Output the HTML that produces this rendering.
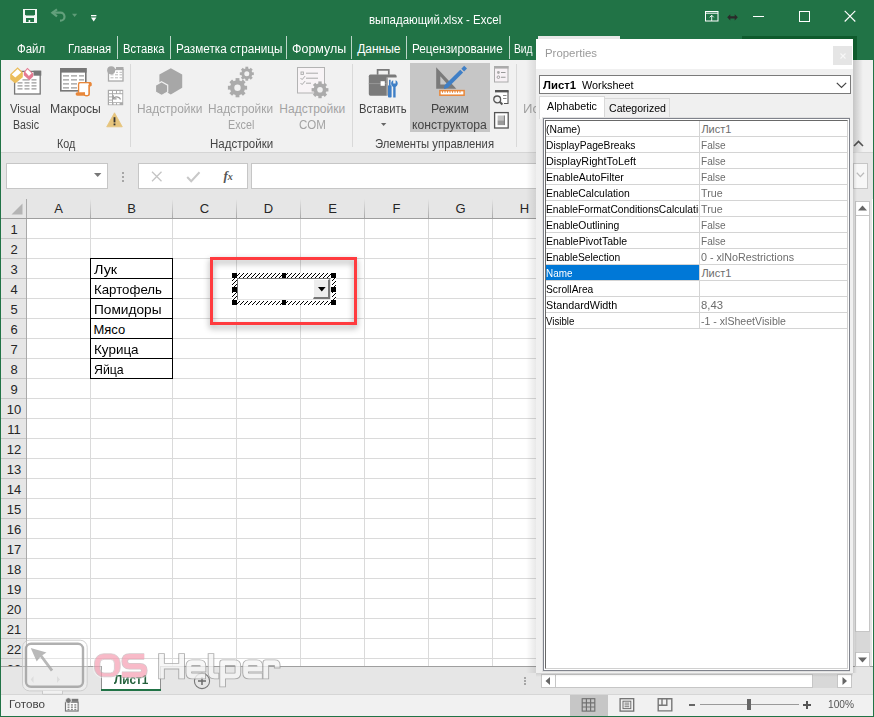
<!DOCTYPE html>
<html><head><meta charset="utf-8">
<style>
*{margin:0;padding:0;box-sizing:border-box}
html,body{width:874px;height:717px;overflow:hidden;background:#fff;font-family:"Liberation Sans",sans-serif}
.a{position:absolute}
.t{position:absolute;white-space:nowrap;line-height:1}
svg{overflow:visible}
</style></head><body>
<div class="a" style="left:0px;top:0px;width:874px;height:60px;background:#217346;"></div>
<div class="a" style="left:1px;top:60px;width:872px;height:92px;background:#f1f1f1;"></div>
<div class="a" style="left:1px;top:152px;width:872px;height:1px;background:#d5d5d5;"></div>
<div class="a" style="left:1px;top:153px;width:872px;height:46px;background:#e6e6e6;"></div>
<svg class="a" style="left:23px;top:9px" width="14" height="14" viewBox="0 0 14 14">
<rect x="0" y="0" width="14" height="14" fill="#f4f8f5"/>
<path d="M2 1.1h10v4.1l-1 1.2H3l-1-1.2z" fill="#217346"/>
<path d="M3 9.1h8v3.9H7.2v-2h-1.6v2H3z" fill="#217346"/>
</svg>
<svg class="a" style="left:50px;top:8px" width="30" height="16" viewBox="0 0 30 16">
<path d="M2.5 4.7h8a4 4 0 0 1 0 8H10" fill="none" stroke="#63a07c" stroke-width="2.2"/>
<path d="M7 1.3L2.4 4.7 7 8.3" stroke="#63a07c" stroke-width="2.2" fill="none"/>
<path d="M22 5.8h5.2l-2.6 3.2z" fill="#5f9c78"/>
</svg>
<svg class="a" style="left:91px;top:14.6px" width="6" height="7" viewBox="0 0 6 7">
<rect x="0" y="0" width="5.4" height="1.3" fill="#fff"/>
<path d="M0 2.6h5.4l-2.7 3.8z" fill="#fff"/>
</svg>
<div class="t" style="top:13.84px;font-size:12px;color:#fff;left:369.40px;transform:scaleX(0.9570);transform-origin:0 0;">выпадающий.xlsx - Excel</div>
<svg class="a" style="left:705px;top:11px" width="14" height="11" viewBox="0 0 14 11">
<rect x="0.5" y="0.5" width="12.5" height="9.5" fill="none" stroke="#fff" stroke-width="1"/>
<path d="M0.5 2.2h12.5" stroke="#fff" stroke-width="1"/>
<path d="M6.7 10V4.2M4.7 6.3l2-2 2 2" stroke="#fff" stroke-width="0.9" fill="none"/>
</svg>
<svg class="a" style="left:726.5px;top:13.5px" width="11" height="7" viewBox="0 0 11 7">
<path d="M0.2 3.3L3.3 0.2v2h4.4v-2l3.1 3.1-3.1 3.1v-2H3.3v2z" fill="#2a2a2a"/>
</svg>
<div class="a" style="left:753px;top:16px;width:11px;height:1px;background:#fff;"></div>
<div class="a" style="left:799px;top:11px;width:11px;height:11px;background:transparent;border:1px solid #fff;"></div>
<svg class="a" style="left:844px;top:10px" width="12" height="12" viewBox="0 0 12 12">
<path d="M0.7 0.9l10.6 10.6M11.3 0.9L0.7 11.5" stroke="#fff" stroke-width="1.1"/>
</svg>
<div class="t" style="top:42.84px;font-size:12px;color:#fff;left:16.70px;transform:scaleX(0.9554);transform-origin:0 0;">Файл</div>
<div class="t" style="top:42.84px;font-size:12px;color:#fff;left:68.30px;transform:scaleX(0.9456);transform-origin:0 0;">Главная</div>
<div class="t" style="top:42.84px;font-size:12px;color:#fff;left:123.40px;transform:scaleX(0.9325);transform-origin:0 0;">Вставка</div>
<div class="t" style="top:42.84px;font-size:12px;color:#fff;left:175.60px;transform:scaleX(0.9773);transform-origin:0 0;">Разметка страницы</div>
<div class="t" style="top:42.84px;font-size:12px;color:#fff;left:291.80px;transform:scaleX(1.0379);transform-origin:0 0;">Формулы</div>
<div class="t" style="top:42.84px;font-size:12px;color:#fff;left:357.20px;">Данные</div>
<div class="t" style="top:42.84px;font-size:12px;color:#fff;left:411.70px;transform:scaleX(0.9787);transform-origin:0 0;">Рецензирование</div>
<div class="t" style="top:42.84px;font-size:12px;color:#fff;left:513.60px;transform:scaleX(0.8564);transform-origin:0 0;">Вид</div>
<div class="a" style="left:117px;top:36px;width:1px;height:23px;background:rgba(255,255,255,0.7);"></div>
<div class="a" style="left:170px;top:36px;width:1px;height:23px;background:rgba(255,255,255,0.7);"></div>
<div class="a" style="left:286px;top:36px;width:1px;height:23px;background:rgba(255,255,255,0.7);"></div>
<div class="a" style="left:351px;top:36px;width:1px;height:23px;background:rgba(255,255,255,0.7);"></div>
<div class="a" style="left:406px;top:36px;width:1px;height:23px;background:rgba(255,255,255,0.7);"></div>
<div class="a" style="left:509px;top:36px;width:1px;height:23px;background:rgba(255,255,255,0.7);"></div>
<div class="a" style="left:538px;top:36px;width:82px;height:3px;background:#e8e8e8;"></div>
<div class="a" style="left:742px;top:36px;width:115px;height:3px;background:#1b5e39;"></div>
<div class="t" style="top:102.84px;font-size:12px;color:#444;left:10.10px;transform:scaleX(0.9363);transform-origin:0 0;">Visual</div>
<div class="t" style="top:118.54px;font-size:12px;color:#444;left:12.80px;transform:scaleX(0.8860);transform-origin:0 0;">Basic</div>
<div class="t" style="top:102.84px;font-size:12px;color:#444;left:49.60px;transform:scaleX(1.0174);transform-origin:0 0;">Макросы</div>
<div class="t" style="top:137.84px;font-size:12px;color:#444;left:56.50px;transform:scaleX(0.8968);transform-origin:0 0;">Код</div>
<div class="t" style="top:102.84px;font-size:12px;color:#a3a3a3;left:137.20px;transform:scaleX(0.9917);transform-origin:0 0;">Надстройки</div>
<div class="t" style="top:102.84px;font-size:12px;color:#a3a3a3;left:208.30px;transform:scaleX(0.9872);transform-origin:0 0;">Надстройки</div>
<div class="t" style="top:118.84px;font-size:12px;color:#a3a3a3;left:228.00px;transform:scaleX(0.8963);transform-origin:0 0;">Excel</div>
<div class="t" style="top:102.84px;font-size:12px;color:#a3a3a3;left:279.30px;">Надстройки</div>
<div class="t" style="top:118.84px;font-size:12px;color:#a3a3a3;left:298.50px;transform:scaleX(0.9607);transform-origin:0 0;">COM</div>
<div class="t" style="top:137.84px;font-size:12px;color:#444;left:209.60px;transform:scaleX(0.9583);transform-origin:0 0;">Надстройки</div>
<div class="a" style="left:410px;top:63px;width:80px;height:69px;background:#c6c6c6;"></div>
<div class="t" style="top:102.84px;font-size:12px;color:#444;left:359.20px;transform:scaleX(0.9356);transform-origin:0 0;">Вставить</div>
<div class="t" style="top:102.84px;font-size:12px;color:#444;left:431.00px;transform:scaleX(1.0270);transform-origin:0 0;">Режим</div>
<div class="t" style="top:118.84px;font-size:12px;color:#444;left:412.00px;transform:scaleX(1.0177);transform-origin:0 0;">конструктора</div>
<div class="t" style="top:137.84px;font-size:12px;color:#444;left:374.70px;transform:scaleX(0.9418);transform-origin:0 0;">Элементы управления</div>
<div class="t" style="top:102.84px;font-size:12px;color:#a3a3a3;left:523.00px;transform:scaleX(1.0940);transform-origin:0 0;">Ис</div>
<div class="a" style="left:130px;top:64px;width:1px;height:83px;background:#d9d9d9;"></div>
<div class="a" style="left:352px;top:64px;width:1px;height:83px;background:#d9d9d9;"></div>
<div class="a" style="left:516px;top:64px;width:1px;height:83px;background:#d9d9d9;"></div>
<svg class="a" style="left:8px;top:66px" width="36" height="30" viewBox="0 0 36 30">
<rect x="6.6" y="5.4" width="25.6" height="22.6" fill="#fff" stroke="#777" stroke-width="1.3"/>
<rect x="25.5" y="4.7" width="7.8" height="5" fill="#777"/>
<g stroke="#9a9a9a" stroke-width="1.2"><path d="M9.5 22.8h5M16.5 22.8h5M23.5 22.8h5M9.5 19.8h5M16.5 19.8h5M23.5 19.8h5M9.5 16.8h5M16.5 16.8h5M23.5 16.8h5M14.5 13.8h7M23.5 13.8h5"/></g>
<path d="M9.6 1.3L14.8 6.3V11.3L7.3 17.4 2.2 13.3V8.3z" fill="#ebbd5c"/>
<path d="M9.6 2.9L13.2 6.4 7.3 11.6 3.8 8.4z" fill="#fff"/>
<path d="M19.4 1.8L25.2 7.4V10.4L21.4 14.2 15.8 9.2V5.9z" fill="#e57a92"/>
<path d="M19.4 3.2L23.6 7.2 20.9 9.9 17.3 6.1z" fill="#fff"/>
</svg>
<svg class="a" style="left:59px;top:67px" width="34" height="30" viewBox="0 0 34 30">
<rect x="1.8" y="1.8" width="25" height="22" fill="#fff" stroke="#777" stroke-width="1.6"/>
<rect x="1" y="1" width="26.6" height="4.6" fill="#777"/>
<g stroke="#9a9a9a" stroke-width="1.2"><path d="M4 8.8h6M12 8.8h6M20 8.8h5M4 12.8h6M12 12.8h6M20 12.8h5M4 16.8h6M12 16.8h6M4 20.8h6M12 20.8h6"/></g>
<path d="M19.6 26V17.2q0-1.6 1.6-1.6h9.6q0.9 0 0.9 0.9v2h-1.6v8.4q0 1.7-1.7 1.7h-1.6q-1.6 0-1.6-1.6V25.5" fill="#fff" stroke="#e8873a" stroke-width="1.3" stroke-linejoin="round"/>
<rect x="19.6" y="16.3" width="9.8" height="11.2" fill="#fff"/>
<path d="M19.6 25.5V17.2q0-1.6 1.6-1.6h9.6q0.9 0 0.9 0.9v2h-1.6v8.4q0 1.7-1.7 1.7h-1.6q-1.6 0-1.6-1.6V25.5" fill="none" stroke="#e8873a" stroke-width="1.3" stroke-linejoin="round"/>
<path d="M18.3 25.2h7.6v3.5h-7.6q-1.7 0-1.7-1.75t1.7-1.75z" fill="#e8873a"/>
<rect x="29.8" y="15.6" width="2.6" height="3" fill="#e8873a"/>
</svg>
<svg class="a" style="left:107px;top:66px" width="17" height="16" viewBox="0 0 17 16">
<rect x="1.5" y="3.5" width="14.5" height="11.5" fill="#fff" stroke="#aaa" stroke-width="1.3"/>
<rect x="9" y="1" width="7.5" height="3" fill="#aaa"/>
<g stroke="#bbb" stroke-width="1"><path d="M3.5 8.8h3M8 8.8h3M12.5 8.8h2.5M3.5 11.8h3M8 11.8h3M12.5 11.8h2.5M9 6.3h2M12.5 6.3h2.5"/></g>
<circle cx="4.2" cy="4.2" r="4" fill="#aaa"/>
</svg>
<svg class="a" style="left:107px;top:89px" width="17" height="17" viewBox="0 0 17 17">
<rect x="0.8" y="0.8" width="15.4" height="15.4" fill="#aaa"/>
<g fill="#fff"><rect x="2" y="2" width="3" height="2.2"/><rect x="6" y="2" width="3" height="2.2"/><rect x="10" y="2" width="2.6" height="2.2"/><rect x="13.5" y="2" width="1.8" height="2.2"/>
<rect x="2" y="5.2" width="3" height="2.2"/><rect x="2" y="8.4" width="3" height="2.2"/><rect x="2" y="11.6" width="3" height="1.6"/><rect x="2" y="14" width="3" height="1.4"/>
<rect x="6" y="5.2" width="9.3" height="8"/><rect x="6.5" y="14" width="2.5" height="1.4"/><rect x="10" y="14" width="2.6" height="1.4"/></g>
<path d="M13.5 10.5a4 3.3 0 0 0-6.5-1.8" fill="none" stroke="#999" stroke-width="1.2"/>
<path d="M6.3 6.3v3.5h3.3" fill="none" stroke="#999" stroke-width="1.2"/>
</svg>
<svg class="a" style="left:106px;top:112px" width="17" height="16" viewBox="0 0 17 16">
<path d="M8.5 0.8L16.3 14.8H0.7z" fill="#e6c47c" stroke="#e6c47c" stroke-width="0.8" stroke-linejoin="round"/>
<rect x="7.6" y="5.2" width="1.8" height="5.2" fill="#333"/>
<rect x="7.6" y="11.5" width="1.8" height="1.8" fill="#333"/>
</svg>
<svg class="a" style="left:155px;top:67px" width="29" height="30" viewBox="0 0 29 30">
<path d="M15.8 1.2l11.4 6.4v13.2l-11.4 6.6-11.4-6.6V7.6z" fill="#a7a7a7"/>
<path d="M6.6 14.8l6.1 3.4v6.8l-6.1 3.5-6.1-3.5v-6.8z" fill="#a7a7a7" stroke="#f1f1f1" stroke-width="1.2"/>
</svg>
<svg class="a" style="left:226px;top:64px" width="34" height="36" viewBox="0 0 34 36"><g transform="translate(11.5 23.7)"><circle r="7.4879999999999995" fill="#ababab"/><rect x="-1.92" y="-9.6" width="3.84" height="4.8" fill="#ababab" transform="rotate(0.0)"/><rect x="-1.92" y="-9.6" width="3.84" height="4.8" fill="#ababab" transform="rotate(45.0)"/><rect x="-1.92" y="-9.6" width="3.84" height="4.8" fill="#ababab" transform="rotate(90.0)"/><rect x="-1.92" y="-9.6" width="3.84" height="4.8" fill="#ababab" transform="rotate(135.0)"/><rect x="-1.92" y="-9.6" width="3.84" height="4.8" fill="#ababab" transform="rotate(180.0)"/><rect x="-1.92" y="-9.6" width="3.84" height="4.8" fill="#ababab" transform="rotate(225.0)"/><rect x="-1.92" y="-9.6" width="3.84" height="4.8" fill="#ababab" transform="rotate(270.0)"/><rect x="-1.92" y="-9.6" width="3.84" height="4.8" fill="#ababab" transform="rotate(315.0)"/><circle r="3.2" fill="#f1f1f1"/></g><g transform="translate(20.8 9.7)"><circle r="5.46" fill="#ababab"/><rect x="-1.4000000000000001" y="-7" width="2.8000000000000003" height="3.5" fill="#ababab" transform="rotate(0.0)"/><rect x="-1.4000000000000001" y="-7" width="2.8000000000000003" height="3.5" fill="#ababab" transform="rotate(45.0)"/><rect x="-1.4000000000000001" y="-7" width="2.8000000000000003" height="3.5" fill="#ababab" transform="rotate(90.0)"/><rect x="-1.4000000000000001" y="-7" width="2.8000000000000003" height="3.5" fill="#ababab" transform="rotate(135.0)"/><rect x="-1.4000000000000001" y="-7" width="2.8000000000000003" height="3.5" fill="#ababab" transform="rotate(180.0)"/><rect x="-1.4000000000000001" y="-7" width="2.8000000000000003" height="3.5" fill="#ababab" transform="rotate(225.0)"/><rect x="-1.4000000000000001" y="-7" width="2.8000000000000003" height="3.5" fill="#ababab" transform="rotate(270.0)"/><rect x="-1.4000000000000001" y="-7" width="2.8000000000000003" height="3.5" fill="#ababab" transform="rotate(315.0)"/><circle r="2.5" fill="#f1f1f1"/></g></svg>
<svg class="a" style="left:296px;top:66px" width="34" height="32" viewBox="0 0 34 32"><rect x="1.5" y="1.5" width="27" height="25.5" fill="#f8f4f6" stroke="#b3b3b3" stroke-width="1"/><rect x="5" y="6" width="2.4" height="2.4" fill="none" stroke="#aaa" stroke-width="0.9"/><path d="M10 7.2h12M10 12.2h12M10 17.2h5" stroke="#aaa" stroke-width="1"/><path d="M4.5 12l1.6 1.6 3-3.5M4.5 17l1.6 1.6 3-3.5" stroke="#aaa" stroke-width="1" fill="none"/><g transform="translate(24 23.8)"><circle r="6.5520000000000005" fill="#ababab"/><rect x="-1.6800000000000002" y="-8.4" width="3.3600000000000003" height="4.2" fill="#ababab" transform="rotate(0.0)"/><rect x="-1.6800000000000002" y="-8.4" width="3.3600000000000003" height="4.2" fill="#ababab" transform="rotate(45.0)"/><rect x="-1.6800000000000002" y="-8.4" width="3.3600000000000003" height="4.2" fill="#ababab" transform="rotate(90.0)"/><rect x="-1.6800000000000002" y="-8.4" width="3.3600000000000003" height="4.2" fill="#ababab" transform="rotate(135.0)"/><rect x="-1.6800000000000002" y="-8.4" width="3.3600000000000003" height="4.2" fill="#ababab" transform="rotate(180.0)"/><rect x="-1.6800000000000002" y="-8.4" width="3.3600000000000003" height="4.2" fill="#ababab" transform="rotate(225.0)"/><rect x="-1.6800000000000002" y="-8.4" width="3.3600000000000003" height="4.2" fill="#ababab" transform="rotate(270.0)"/><rect x="-1.6800000000000002" y="-8.4" width="3.3600000000000003" height="4.2" fill="#ababab" transform="rotate(315.0)"/><circle r="2.8" fill="#f1f1f1"/></g></svg>
<svg class="a" style="left:368px;top:68px" width="32" height="31" viewBox="0 0 32 31">
<path d="M9.6 6.8V1.8h11.2v5" fill="none" stroke="#7a7a7a" stroke-width="1.7"/>
<rect x="0.8" y="6.6" width="27.8" height="21.1" rx="1.6" fill="#7a7a7a"/>
<path d="M0.8 15.6h27.8" stroke="#9a9a9a" stroke-width="0.9"/>
<rect x="12.6" y="13.2" width="4.2" height="4.6" fill="#fff"/>
<rect x="18.6" y="9.5" width="12.5" height="21" fill="#f1f1f1"/>
<rect x="18.6" y="9.5" width="1" height="18.2" fill="#7a7a7a"/>
<g fill="#3f7fc6">
<rect x="21" y="11.8" width="1.6" height="6"/>
<rect x="20" y="17.2" width="3.6" height="12.3" rx="0.8"/>
<path d="M25.2 12.2v3.4h2.4v-3.4c1.3 0.6 2.1 1.9 2.1 3.4 0 1.5-0.9 2.8-2.1 3.4v10.5h-2.4V19c-1.3-0.6-2.1-1.9-2.1-3.4 0-1.5 0.8-2.8 2.1-3.4z"/>
</g>
</svg>
<svg class="a" style="left:380.8px;top:122.9px" width="6" height="4" viewBox="0 0 6 4"><path d="M0 0h5.3L2.65 3.1z" fill="#666"/></svg>
<svg class="a" style="left:435px;top:66px" width="34" height="31" viewBox="0 0 34 31">
<path d="M1.2 1.2V22.7H21.3z" fill="#7a7a7a"/>
<path d="M5.3 10.3V18.5H12.6z" fill="#c6c6c6"/>
<path d="M9 22.7L10.07 18.81 25.3 3.7 28.1 6.5 12.89 21.65z" fill="#3f7fc6"/>
<path d="M9 22.7L10.07 18.81 12.89 21.65z" fill="#3f7fc6"/>
<path d="M26.3 2.7L29.2 -0.2 32 2.6 29.1 5.5z" fill="#3f7fc6"/>
<rect x="4.9" y="24.6" width="24.2" height="4.6" fill="#fff" stroke="#e8873a" stroke-width="1.5"/>
<path d="M7.5 24.6v2.2M10 24.6v2.2M12.5 24.6v2.2M15 24.6v2.2M17.5 24.6v2.2M20 24.6v2.2M22.5 24.6v2.2M25 24.6v2.2" stroke="#e8873a" stroke-width="1"/>
</svg>
<svg class="a" style="left:493px;top:65px" width="17" height="64" viewBox="0 0 17 64">
<rect x="1.5" y="1.5" width="13.5" height="15.5" fill="#f7f1f5" stroke="#ababab" stroke-width="1"/>
<rect x="1" y="1" width="14.5" height="2.6" fill="#ababab"/>
<circle cx="5.4" cy="7.5" r="1.4" fill="#aaa"/><circle cx="5.4" cy="12.2" r="1.3" fill="none" stroke="#999" stroke-width="0.9"/>
<path d="M8 7.5h4.5M8 12.2h4.5" stroke="#999" stroke-width="1.1"/>
<path d="M2 26h13v12.5h-4" fill="#fff" stroke="#555" stroke-width="1.1"/>
<rect x="2" y="25" width="13.5" height="2.4" fill="#555"/>
<path d="M10 30.5h3.5M10 33.5h3.5" stroke="#888" stroke-width="1"/>
<circle cx="4.2" cy="34.4" r="3.4" fill="#f1f1f1" stroke="#555" stroke-width="1.3"/><path d="M6.6 36.8l2.8 2.6" stroke="#555" stroke-width="2"/>
<rect x="1.6" y="47.6" width="13.6" height="15.4" fill="#fff" stroke="#555" stroke-width="1.3"/>
<rect x="4.6" y="50.5" width="6.8" height="4.8" fill="#c2c2c2"/><rect x="4.6" y="55.3" width="6.8" height="4.8" fill="#9a9a9a"/>
<path d="M11.4 50.5v9.6" stroke="#777" stroke-width="1"/>
</svg>
<div class="a" style="left:6px;top:163px;width:102px;height:26px;background:#fff;border:1px solid #c6c6c6;"></div>
<svg class="a" style="left:94px;top:173px" width="8" height="5" viewBox="0 0 8 5"><path d="M0 0h7.4l-3.7 4z" fill="#777"/></svg>
<div class="a" style="left:122px;top:171.5px;width:2px;height:2px;background:#a6a6a6;"></div>
<div class="a" style="left:122px;top:175.5px;width:2px;height:2px;background:#a6a6a6;"></div>
<div class="a" style="left:122px;top:179.5px;width:2px;height:2px;background:#a6a6a6;"></div>
<div class="a" style="left:138px;top:163px;width:110px;height:26px;background:#fff;border:1px solid #c6c6c6;"></div>
<svg class="a" style="left:151px;top:171px" width="12" height="11" viewBox="0 0 12 11"><path d="M1 0.8l9.5 9.5M10.5 0.8L1 10.3" stroke="#c4c4c4" stroke-width="1.3"/></svg>
<svg class="a" style="left:186px;top:171px" width="15" height="12" viewBox="0 0 15 12"><path d="M1.2 6l4 4.2L13.5 1.2" fill="none" stroke="#c8c8c8" stroke-width="2"/></svg>
<div class="t" style="top:169.00px;font-size:13px;color:#555;font-family:'Liberation Serif',serif;font-weight:700;left:223.50px;"><i>f</i><span style="font-size:10px"><i>x</i></span></div>
<div class="a" style="left:251px;top:163px;width:603px;height:26px;background:#fff;border:1px solid #c6c6c6;"></div>
<div class="a" style="left:853px;top:163px;width:15px;height:26px;background:#f7f7f7;border:1px solid #c6c6c6;"></div>
<svg class="a" style="left:856px;top:172px" width="9" height="6" viewBox="0 0 9 6"><path d="M0.8 0.8l3.6 3.8 3.6-3.8" fill="none" stroke="#bbb" stroke-width="1.3"/></svg>
<svg class="a" style="left:853px;top:140px" width="11" height="7" viewBox="0 0 11 7"><path d="M1 6l4.5-4.5L10 6" fill="none" stroke="#555" stroke-width="1.6"/></svg>
<div class="a" style="left:1px;top:199px;width:855px;height:19px;background:#e6e6e6;"></div>
<div class="a" style="left:1px;top:219px;width:25px;height:447px;background:#e6e6e6;"></div>
<svg class="a" style="left:11px;top:203px" width="12" height="12" viewBox="0 0 12 12"><path d="M11.5 0.5V11.5H0.5z" fill="#b4b4b4"/></svg>
<div class="a" style="left:90px;top:199px;width:1px;height:19px;background:linear-gradient(#e6e6e6,#a9a9a9);"></div>
<div class="a" style="left:90px;top:219px;width:1px;height:447px;background:#dadada;"></div>
<div class="t" style="top:202.00px;font-size:13px;color:#262626;left:54.16px;">A</div>
<div class="a" style="left:172px;top:199px;width:1px;height:19px;background:linear-gradient(#e6e6e6,#a9a9a9);"></div>
<div class="a" style="left:172px;top:219px;width:1px;height:447px;background:#dadada;"></div>
<div class="t" style="top:202.00px;font-size:13px;color:#262626;left:127.16px;">B</div>
<div class="a" style="left:236px;top:199px;width:1px;height:19px;background:linear-gradient(#e6e6e6,#a9a9a9);"></div>
<div class="a" style="left:236px;top:219px;width:1px;height:447px;background:#dadada;"></div>
<div class="t" style="top:202.00px;font-size:13px;color:#262626;left:199.80px;">C</div>
<div class="a" style="left:300px;top:199px;width:1px;height:19px;background:linear-gradient(#e6e6e6,#a9a9a9);"></div>
<div class="a" style="left:300px;top:219px;width:1px;height:447px;background:#dadada;"></div>
<div class="t" style="top:202.00px;font-size:13px;color:#262626;left:263.80px;">D</div>
<div class="a" style="left:364px;top:199px;width:1px;height:19px;background:linear-gradient(#e6e6e6,#a9a9a9);"></div>
<div class="a" style="left:364px;top:219px;width:1px;height:447px;background:#dadada;"></div>
<div class="t" style="top:202.00px;font-size:13px;color:#262626;left:328.16px;">E</div>
<div class="a" style="left:428px;top:199px;width:1px;height:19px;background:linear-gradient(#e6e6e6,#a9a9a9);"></div>
<div class="a" style="left:428px;top:219px;width:1px;height:447px;background:#dadada;"></div>
<div class="t" style="top:202.00px;font-size:13px;color:#262626;left:392.52px;">F</div>
<div class="a" style="left:492px;top:199px;width:1px;height:19px;background:linear-gradient(#e6e6e6,#a9a9a9);"></div>
<div class="a" style="left:492px;top:219px;width:1px;height:447px;background:#dadada;"></div>
<div class="t" style="top:202.00px;font-size:13px;color:#262626;left:455.44px;">G</div>
<div class="a" style="left:556px;top:199px;width:1px;height:19px;background:linear-gradient(#e6e6e6,#a9a9a9);"></div>
<div class="a" style="left:556px;top:219px;width:1px;height:447px;background:#dadada;"></div>
<div class="t" style="top:202.00px;font-size:13px;color:#262626;left:519.80px;">H</div>
<div class="a" style="left:620px;top:199px;width:1px;height:19px;background:linear-gradient(#e6e6e6,#a9a9a9);"></div>
<div class="a" style="left:620px;top:219px;width:1px;height:447px;background:#dadada;"></div>
<div class="t" style="top:202.00px;font-size:13px;color:#262626;left:586.69px;">I</div>
<div class="a" style="left:684px;top:199px;width:1px;height:19px;background:linear-gradient(#e6e6e6,#a9a9a9);"></div>
<div class="a" style="left:684px;top:219px;width:1px;height:447px;background:#dadada;"></div>
<div class="t" style="top:202.00px;font-size:13px;color:#262626;left:649.25px;">J</div>
<div class="a" style="left:748px;top:199px;width:1px;height:19px;background:linear-gradient(#e6e6e6,#a9a9a9);"></div>
<div class="a" style="left:748px;top:219px;width:1px;height:447px;background:#dadada;"></div>
<div class="t" style="top:202.00px;font-size:13px;color:#262626;left:712.16px;">K</div>
<div class="a" style="left:812px;top:199px;width:1px;height:19px;background:linear-gradient(#e6e6e6,#a9a9a9);"></div>
<div class="a" style="left:812px;top:219px;width:1px;height:447px;background:#dadada;"></div>
<div class="t" style="top:202.00px;font-size:13px;color:#262626;left:776.88px;">L</div>
<div class="a" style="left:876px;top:199px;width:1px;height:19px;background:linear-gradient(#e6e6e6,#a9a9a9);"></div>
<div class="a" style="left:876px;top:219px;width:1px;height:447px;background:#dadada;"></div>
<div class="t" style="top:202.00px;font-size:13px;color:#262626;left:839.08px;">M</div>
<div class="a" style="left:26px;top:199px;width:1px;height:467px;background:#a9a9a9;"></div>
<div class="a" style="left:1px;top:218px;width:855px;height:1px;background:#9e9e9e;"></div>
<div class="a" style="left:1px;top:238px;width:25px;height:1px;background:#c6c6c6;"></div>
<div class="a" style="left:27px;top:238px;width:829px;height:1px;background:#dadada;"></div>
<div class="t" style="top:222.50px;font-size:13px;color:#262626;left:10.38px;">1</div>
<div class="a" style="left:1px;top:258px;width:25px;height:1px;background:#c6c6c6;"></div>
<div class="a" style="left:27px;top:258px;width:829px;height:1px;background:#dadada;"></div>
<div class="t" style="top:242.50px;font-size:13px;color:#262626;left:10.38px;">2</div>
<div class="a" style="left:1px;top:278px;width:25px;height:1px;background:#c6c6c6;"></div>
<div class="a" style="left:27px;top:278px;width:829px;height:1px;background:#dadada;"></div>
<div class="t" style="top:262.50px;font-size:13px;color:#262626;left:10.38px;">3</div>
<div class="a" style="left:1px;top:298px;width:25px;height:1px;background:#c6c6c6;"></div>
<div class="a" style="left:27px;top:298px;width:829px;height:1px;background:#dadada;"></div>
<div class="t" style="top:282.50px;font-size:13px;color:#262626;left:10.38px;">4</div>
<div class="a" style="left:1px;top:318px;width:25px;height:1px;background:#c6c6c6;"></div>
<div class="a" style="left:27px;top:318px;width:829px;height:1px;background:#dadada;"></div>
<div class="t" style="top:302.50px;font-size:13px;color:#262626;left:10.38px;">5</div>
<div class="a" style="left:1px;top:338px;width:25px;height:1px;background:#c6c6c6;"></div>
<div class="a" style="left:27px;top:338px;width:829px;height:1px;background:#dadada;"></div>
<div class="t" style="top:322.50px;font-size:13px;color:#262626;left:10.38px;">6</div>
<div class="a" style="left:1px;top:358px;width:25px;height:1px;background:#c6c6c6;"></div>
<div class="a" style="left:27px;top:358px;width:829px;height:1px;background:#dadada;"></div>
<div class="t" style="top:342.50px;font-size:13px;color:#262626;left:10.38px;">7</div>
<div class="a" style="left:1px;top:378px;width:25px;height:1px;background:#c6c6c6;"></div>
<div class="a" style="left:27px;top:378px;width:829px;height:1px;background:#dadada;"></div>
<div class="t" style="top:362.50px;font-size:13px;color:#262626;left:10.38px;">8</div>
<div class="a" style="left:1px;top:398px;width:25px;height:1px;background:#c6c6c6;"></div>
<div class="a" style="left:27px;top:398px;width:829px;height:1px;background:#dadada;"></div>
<div class="t" style="top:382.50px;font-size:13px;color:#262626;left:10.38px;">9</div>
<div class="a" style="left:1px;top:418px;width:25px;height:1px;background:#c6c6c6;"></div>
<div class="a" style="left:27px;top:418px;width:829px;height:1px;background:#dadada;"></div>
<div class="t" style="top:402.50px;font-size:13px;color:#262626;left:6.77px;">10</div>
<div class="a" style="left:1px;top:438px;width:25px;height:1px;background:#c6c6c6;"></div>
<div class="a" style="left:27px;top:438px;width:829px;height:1px;background:#dadada;"></div>
<div class="t" style="top:422.50px;font-size:13px;color:#262626;left:7.25px;">11</div>
<div class="a" style="left:1px;top:458px;width:25px;height:1px;background:#c6c6c6;"></div>
<div class="a" style="left:27px;top:458px;width:829px;height:1px;background:#dadada;"></div>
<div class="t" style="top:442.50px;font-size:13px;color:#262626;left:6.77px;">12</div>
<div class="a" style="left:1px;top:478px;width:25px;height:1px;background:#c6c6c6;"></div>
<div class="a" style="left:27px;top:478px;width:829px;height:1px;background:#dadada;"></div>
<div class="t" style="top:462.50px;font-size:13px;color:#262626;left:6.77px;">13</div>
<div class="a" style="left:1px;top:498px;width:25px;height:1px;background:#c6c6c6;"></div>
<div class="a" style="left:27px;top:498px;width:829px;height:1px;background:#dadada;"></div>
<div class="t" style="top:482.50px;font-size:13px;color:#262626;left:6.77px;">14</div>
<div class="a" style="left:1px;top:518px;width:25px;height:1px;background:#c6c6c6;"></div>
<div class="a" style="left:27px;top:518px;width:829px;height:1px;background:#dadada;"></div>
<div class="t" style="top:502.50px;font-size:13px;color:#262626;left:6.77px;">15</div>
<div class="a" style="left:1px;top:538px;width:25px;height:1px;background:#c6c6c6;"></div>
<div class="a" style="left:27px;top:538px;width:829px;height:1px;background:#dadada;"></div>
<div class="t" style="top:522.50px;font-size:13px;color:#262626;left:6.77px;">16</div>
<div class="a" style="left:1px;top:558px;width:25px;height:1px;background:#c6c6c6;"></div>
<div class="a" style="left:27px;top:558px;width:829px;height:1px;background:#dadada;"></div>
<div class="t" style="top:542.50px;font-size:13px;color:#262626;left:6.77px;">17</div>
<div class="a" style="left:1px;top:578px;width:25px;height:1px;background:#c6c6c6;"></div>
<div class="a" style="left:27px;top:578px;width:829px;height:1px;background:#dadada;"></div>
<div class="t" style="top:562.50px;font-size:13px;color:#262626;left:6.77px;">18</div>
<div class="a" style="left:1px;top:598px;width:25px;height:1px;background:#c6c6c6;"></div>
<div class="a" style="left:27px;top:598px;width:829px;height:1px;background:#dadada;"></div>
<div class="t" style="top:582.50px;font-size:13px;color:#262626;left:6.77px;">19</div>
<div class="a" style="left:1px;top:618px;width:25px;height:1px;background:#c6c6c6;"></div>
<div class="a" style="left:27px;top:618px;width:829px;height:1px;background:#dadada;"></div>
<div class="t" style="top:602.50px;font-size:13px;color:#262626;left:6.77px;">20</div>
<div class="a" style="left:1px;top:638px;width:25px;height:1px;background:#c6c6c6;"></div>
<div class="a" style="left:27px;top:638px;width:829px;height:1px;background:#dadada;"></div>
<div class="t" style="top:622.50px;font-size:13px;color:#262626;left:6.77px;">21</div>
<div class="a" style="left:1px;top:658px;width:25px;height:1px;background:#c6c6c6;"></div>
<div class="a" style="left:27px;top:658px;width:829px;height:1px;background:#dadada;"></div>
<div class="t" style="top:642.50px;font-size:13px;color:#262626;left:6.77px;">22</div>
<div class="t" style="top:662.50px;font-size:13px;color:#262626;left:6.77px;">23</div>
<div class="a" style="left:90px;top:258px;width:83px;height:121px;background:transparent;border:1px solid #000;"></div>
<div class="a" style="left:90px;top:278px;width:83px;height:1px;background:#000;"></div>
<div class="a" style="left:90px;top:298px;width:83px;height:1px;background:#000;"></div>
<div class="a" style="left:90px;top:318px;width:83px;height:1px;background:#000;"></div>
<div class="a" style="left:90px;top:338px;width:83px;height:1px;background:#000;"></div>
<div class="a" style="left:90px;top:358px;width:83px;height:1px;background:#000;"></div>
<div class="t" style="top:263.00px;font-size:13px;color:#000;left:93.50px;transform:scaleX(1.1114);transform-origin:0 0;">Лук</div>
<div class="t" style="top:283.00px;font-size:13px;color:#000;left:93.50px;transform:scaleX(1.0204);transform-origin:0 0;">Картофель</div>
<div class="t" style="top:303.00px;font-size:13px;color:#000;left:93.50px;transform:scaleX(1.0519);transform-origin:0 0;">Помидоры</div>
<div class="t" style="top:323.00px;font-size:13px;color:#000;left:93.50px;">Мясо</div>
<div class="t" style="top:343.00px;font-size:13px;color:#000;left:93.50px;transform:scaleX(1.0346);transform-origin:0 0;">Курица</div>
<div class="t" style="top:363.00px;font-size:13px;color:#000;left:93.50px;transform:scaleX(0.9480);transform-origin:0 0;">Яйца</div>
<div class="a" style="left:1px;top:666px;width:872px;height:28px;background:#e6e6e6;"></div>
<div class="a" style="left:1px;top:666px;width:872px;height:1px;background:#9f9f9f;"></div>
<div class="a" style="left:101px;top:666px;width:60px;height:25px;background:#fff;border-left:1px solid #8f8f8f;border-right:1px solid #8f8f8f;"></div>
<div class="a" style="left:101px;top:689px;width:60px;height:2px;background:#217346;"></div>
<div class="t" style="top:673.00px;font-size:13px;color:#22603a;font-weight:700;left:113.50px;transform:scaleX(0.9064);transform-origin:0 0;">Лист1</div>
<svg class="a" style="left:193px;top:671.5px" width="18" height="18" viewBox="0 0 18 18"><circle cx="9" cy="9" r="7.6" fill="none" stroke="#777" stroke-width="1.1"/><path d="M9 5v8M5 9h8" stroke="#6a6a6a" stroke-width="1.5"/></svg>
<div class="a" style="left:524px;top:677px;width:2px;height:2px;background:#a6a6a6;"></div>
<div class="a" style="left:524px;top:680px;width:2px;height:2px;background:#a6a6a6;"></div>
<div class="a" style="left:524px;top:683px;width:2px;height:2px;background:#a6a6a6;"></div>
<div class="a" style="left:541px;top:674px;width:15px;height:14px;background:#fff;border:1px solid #c6c6c6;"></div>
<svg class="a" style="left:545px;top:677px" width="6" height="8" viewBox="0 0 6 8"><path d="M5 0v8L0.5 4z" fill="#666"/></svg>
<div class="a" style="left:555px;top:674px;width:283px;height:14px;background:#d8d8d8;"></div>
<div class="a" style="left:555px;top:674px;width:258px;height:14px;background:#fff;border:1px solid #c6c6c6;"></div>
<div class="a" style="left:837px;top:674px;width:15px;height:14px;background:#fff;border:1px solid #c6c6c6;"></div>
<svg class="a" style="left:842px;top:677px" width="6" height="8" viewBox="0 0 6 8"><path d="M0.5 0v8L5 4z" fill="#666"/></svg>
<div class="a" style="left:855px;top:199px;width:17px;height:467px;background:#e6e6e6;"></div>
<div class="a" style="left:855px;top:201px;width:15px;height:15px;background:#fff;border:1px solid #c6c6c6;"></div>
<svg class="a" style="left:858px;top:205px" width="9" height="6" viewBox="0 0 9 6"><path d="M0 5.5h9L4.5 0.5z" fill="#666"/></svg>
<div class="a" style="left:855px;top:215px;width:15px;height:437px;background:#d8d8d8;"></div>
<div class="a" style="left:855px;top:215px;width:15px;height:417px;background:#fff;border:1px solid #c6c6c6;"></div>
<div class="a" style="left:855px;top:652px;width:15px;height:15px;background:#fff;border:1px solid #c6c6c6;"></div>
<svg class="a" style="left:858px;top:657px" width="9" height="6" viewBox="0 0 9 6"><path d="M0 0.5h9L4.5 5.5z" fill="#666"/></svg>
<div class="a" style="left:1px;top:694px;width:872px;height:22px;background:#f1f1f1;"></div>
<div class="a" style="left:1px;top:694px;width:872px;height:1px;background:#d6d6d6;"></div>
<div class="t" style="top:698.87px;font-size:11.5px;color:#444;left:9.40px;transform:scaleX(1.0136);transform-origin:0 0;">Готово</div>
<svg class="a" style="left:64px;top:697px" width="15" height="15" viewBox="0 0 15 15"><rect x="1.5" y="5.2" width="12.6" height="8.8" fill="#fff" stroke="#777" stroke-width="1.2"/><rect x="7.5" y="1.8" width="6.8" height="3" fill="#777"/><g fill="#888"><rect x="3.5" y="7.2" width="2" height="1.4"/><rect x="6.9" y="7.2" width="2" height="1.4"/><rect x="10.3" y="7.2" width="2" height="1.4"/><rect x="3.5" y="9.5" width="2" height="1.4"/><rect x="6.9" y="9.5" width="2" height="1.4"/><rect x="10.3" y="9.5" width="2" height="1.4"/><rect x="3.5" y="11.8" width="2" height="1.4"/><rect x="6.9" y="11.8" width="2" height="1.4"/><rect x="10.3" y="11.8" width="2" height="1.4"/></g><circle cx="4.4" cy="3.6" r="2.9" fill="#777" stroke="#f1f1f1" stroke-width="0.8"/></svg>
<div class="a" style="left:570px;top:695px;width:38px;height:21px;background:#c6c6c6;"></div>
<svg class="a" style="left:581px;top:698px" width="15" height="14" viewBox="0 0 15 14"><g fill="none" stroke="#707070" stroke-width="1.15"><rect x="1.2" y="0.7" width="12.6" height="12.4"/><path d="M5.4 0.7v12.4M9.6 0.7v12.4M1.2 4.9h12.6M1.2 9h12.6"/></g></svg>
<svg class="a" style="left:619px;top:698px" width="16" height="14" viewBox="0 0 16 14"><rect x="1.1" y="0.7" width="13.6" height="12.4" fill="none" stroke="#707070" stroke-width="1.3"/><rect x="4" y="3.2" width="7.8" height="7.4" fill="none" stroke="#707070" stroke-width="1"/><path d="M5.6 5.1h4.6M5.6 6.9h4.6M5.6 8.7h4.6" stroke="#707070" stroke-width="0.9"/></svg>
<svg class="a" style="left:657px;top:698px" width="16" height="14" viewBox="0 0 16 14"><path d="M1.2 0.7h13.6v12.2H1.2z" fill="none" stroke="#777" stroke-width="1.4"/><path d="M5 0.7v6.6H1.2M9.8 0.7v6.6H5" fill="none" stroke="#777" stroke-width="1.4"/></svg>
<div class="a" style="left:689px;top:704px;width:6px;height:2px;background:#666;"></div>
<div class="a" style="left:699.5px;top:704px;width:99px;height:1px;background:#9a9a9a;"></div>
<div class="a" style="left:747px;top:699px;width:4px;height:11px;background:#666;"></div>
<div class="a" style="left:802.5px;top:703.8px;width:8.5px;height:2px;background:#555;"></div>
<div class="a" style="left:805.8px;top:700.6px;width:2px;height:8.5px;background:#555;"></div>
<div class="t" style="top:698.67px;font-size:11.5px;color:#555;left:827.90px;transform:scaleX(0.8837);transform-origin:0 0;">100%</div>
<div class="a" style="left:210px;top:257px;width:147px;height:68px;border:3px solid #ff3b3f;filter:drop-shadow(0 3px 3px rgba(0,0,0,0.38))"></div>
<svg class="a" style="left:232px;top:273px" width="104" height="32" shape-rendering="crispEdges"><defs><pattern id="hp" width="4" height="4" patternUnits="userSpaceOnUse"><rect width="4" height="4" fill="#fff"/><rect x="3" y="0" width="1" height="1" fill="#000"/><rect x="2" y="1" width="1" height="1" fill="#000"/><rect x="1" y="2" width="1" height="1" fill="#000"/><rect x="0" y="3" width="1" height="1" fill="#000"/></pattern></defs><rect width="104" height="32" fill="url(#hp)"/></svg>
<div class="a" style="left:236.5px;top:277.5px;width:95px;height:23px;background:#fff;"></div>
<div class="a" style="left:237px;top:277.5px;width:94px;height:22px;background:#fff;border-top:1.3px solid #737373;border-left:1.3px solid #737373;border-right:1px solid #e4e4e4;border-bottom:1px solid #e4e4e4;"></div>
<div class="a" style="left:313px;top:278.5px;width:17px;height:20px;background:#ededed;border-top:1px solid #fff;border-left:1px solid #fff;border-right:2px solid #777;border-bottom:2px solid #777;"></div>
<svg class="a" style="left:317.5px;top:286.5px" width="8" height="5" viewBox="0 0 8 5"><path d="M0 0h7.6L3.8 4.4z" fill="#000"/></svg>
<div class="a" style="left:232px;top:273px;width:4.8px;height:4.8px;background:#000;"></div>
<div class="a" style="left:232px;top:300.2px;width:4.8px;height:4.8px;background:#000;"></div>
<div class="a" style="left:281.5px;top:273px;width:4.8px;height:4.8px;background:#000;"></div>
<div class="a" style="left:281.5px;top:300.2px;width:4.8px;height:4.8px;background:#000;"></div>
<div class="a" style="left:331.3px;top:273px;width:4.8px;height:4.8px;background:#000;"></div>
<div class="a" style="left:331.3px;top:300.2px;width:4.8px;height:4.8px;background:#000;"></div>
<div class="a" style="left:232px;top:287px;width:4.8px;height:5.2px;background:#000;"></div>
<div class="a" style="left:331.3px;top:287px;width:4.8px;height:5.2px;background:#000;"></div>
<svg class="a" style="left:20px;top:636px" width="270" height="62" viewBox="20 636 270 62">
<g opacity="0.85">
<rect x="22.5" y="640.2" width="64.7" height="50.7" rx="7" fill="rgba(255,255,255,0.35)" stroke="#c9c9c9" stroke-width="1"/>
<rect x="26" y="643.8" width="57" height="43" rx="5" fill="none" stroke="#a3a3a3" stroke-width="2.4"/>
<path d="M42.5 690.8v3.5h20v-3.5" fill="#f4f4f4" stroke="#c4c4c4" stroke-width="1"/>
<path d="M30.7 648l15.8 4.6-4.2 2.6 10.9 14.5-2.3 1.7-10.7-14.5-3.5 4.6z" fill="#adadad"/>
<path d="M33.5 676l-2.8 3.5 2.8 3.5zM57 676l3 3.5-3 3.5z" fill="#dcdcdc"/>
</g>
<g opacity="0.72">
<path d="M103.5 653.8H111.2A9 9 0 0 1 120.2 662.8V667.8A9 9 0 0 1 111.2 676.8H103.5A9 9 0 0 1 94.5 667.8V662.8A9 9 0 0 1 103.5 653.8ZM104 659.3A4 4 0 0 0 100 663.3V669A4 4 0 0 0 104 673H110.4A4 4 0 0 0 114.4 669V663.3A4 4 0 0 0 110.4 659.3Z" fill="none" stroke="rgba(255,255,255,0.6)" stroke-width="3"/>
<path d="M144.2 656.5H129.5Q124.7 656.5 124.7 661.3Q124.7 666.2 129.5 666.2H140Q144.3 666.2 144.3 670.45Q144.3 674.7 140 674.7H121.9" fill="none" stroke="rgba(255,255,255,0.6)" stroke-width="8"/>
<path d="M144.2 656.5H129.5Q124.7 656.5 124.7 661.3Q124.7 666.2 129.5 666.2H140Q144.3 666.2 144.3 670.45Q144.3 674.7 140 674.7H121.9" fill="none" stroke="#c4b4b8" stroke-width="6.6"/>
<path d="M103.5 653.8H111.2A9 9 0 0 1 120.2 662.8V667.8A9 9 0 0 1 111.2 676.8H103.5A9 9 0 0 1 94.5 667.8V662.8A9 9 0 0 1 103.5 653.8ZM104 659.3A4 4 0 0 0 100 663.3V669A4 4 0 0 0 104 673H110.4A4 4 0 0 0 114.4 669V663.3A4 4 0 0 0 110.4 659.3Z" fill="#f6a0b4" fill-rule="evenodd" stroke="#c4b4b8" stroke-width="0.8"/>
<path d="M144.2 656.5H129.5Q124.7 656.5 124.7 661.3Q124.7 666.2 129.5 666.2H140Q144.3 666.2 144.3 670.45Q144.3 674.7 140 674.7H121.9" fill="none" stroke="#f6a0b4" stroke-width="5"/>
</g>
<g fill="none" stroke-linecap="square" stroke-linejoin="round" opacity="0.8">
<g stroke="#999" stroke-width="6.6">
<path d="M161.5 656.5v19.5M181.6 656.5v19.5M161.5 666.2h20.1"/>
<path d="M203 669H188.8v-3q0-3.3 3.3-3.3h7.6q3.3 0 3.3 3.3v3M188.8 669v3.7q0 3.3 3.3 3.3h10.6"/>
<path d="M211 656.5v16q0 3.5 3.5 3.5h1.5"/>
<path d="M222.6 684v-21.3h12q3.3 0 3.3 3.3v6.7q0 3.3-3.3 3.3h-12"/>
<path d="M259.8 669H245.6v-3q0-3.3 3.3-3.3h7.6q3.3 0 3.3 3.3v3M245.6 669v3.7q0 3.3 3.3 3.3h10.6"/>
<path d="M265.8 676v-13.3h9q2.4 0 2.4 2.4"/>
</g>
<g stroke="#f6f6f6" stroke-width="4.8">
<path d="M161.5 656.5v19.5M181.6 656.5v19.5M161.5 666.2h20.1"/>
<path d="M203 669H188.8v-3q0-3.3 3.3-3.3h7.6q3.3 0 3.3 3.3v3M188.8 669v3.7q0 3.3 3.3 3.3h10.6"/>
<path d="M211 656.5v16q0 3.5 3.5 3.5h1.5"/>
<path d="M222.6 684v-21.3h12q3.3 0 3.3 3.3v6.7q0 3.3-3.3 3.3h-12"/>
<path d="M259.8 669H245.6v-3q0-3.3 3.3-3.3h7.6q3.3 0 3.3 3.3v3M245.6 669v3.7q0 3.3 3.3 3.3h10.6"/>
<path d="M265.8 676v-13.3h9q2.4 0 2.4 2.4"/>
</g>
</g>
</svg>
<div class="a" style="left:742px;top:36px;width:115px;height:3px;background:#0f5b2d;"></div>
<div class="a" style="left:853px;top:36px;width:4px;height:24px;background:#0f5b2d;"></div>
<div class="a" style="left:853px;top:60px;width:10px;height:92px;background:linear-gradient(90deg,rgba(0,0,0,0.18),rgba(0,0,0,0));"></div>
<div class="a" style="left:526px;top:60px;width:10px;height:613px;background:linear-gradient(270deg,rgba(0,0,0,0.09),rgba(0,0,0,0));"></div>
<div class="a" style="left:853px;top:199px;width:2px;height:467px;background:#e6e6e6;"></div>
<div class="a" style="left:853px;top:152px;width:4px;height:521px;background:linear-gradient(90deg,rgba(0,0,0,0.12),rgba(0,0,0,0));"></div>
<div class="a" style="left:536px;top:673px;width:317px;height:4px;background:linear-gradient(rgba(0,0,0,0.10),rgba(0,0,0,0));"></div>
<div class="a" style="left:536px;top:39px;width:317px;height:634px;background:#f0f0f0;"></div>
<div class="a" style="left:536px;top:39px;width:317px;height:30px;background:#fff;"></div>
<div class="t" style="top:47.97px;font-size:11.5px;color:#9a9a9a;left:544.60px;transform:scaleX(0.9920);transform-origin:0 0;">Properties</div>
<div class="a" style="left:833px;top:46px;width:19px;height:19px;background:#e5e5e5;"></div>
<svg class="a" style="left:840px;top:53px" width="6" height="6" viewBox="0 0 6 6"><path d="M0.5 0.5l5 5M5.5 0.5l-5 5" stroke="#f7f7f7" stroke-width="1.1"/></svg>
<div class="a" style="left:539px;top:75px;width:312px;height:19px;background:#fff;border:1px solid #7a7a7a;"></div>
<div class="t" style="top:80.27px;font-size:11.5px;color:#000;font-weight:700;left:543.00px;transform:scaleX(0.9832);transform-origin:0 0;">Лист1</div>
<div class="t" style="top:80.27px;font-size:11.5px;color:#000;left:582.00px;transform:scaleX(0.9404);transform-origin:0 0;">Worksheet</div>
<svg class="a" style="left:836px;top:82px" width="11" height="7" viewBox="0 0 11 7"><path d="M0.8 0.8l4.7 4.7 4.7-4.7" fill="none" stroke="#444" stroke-width="1.2"/></svg>
<div class="a" style="left:604px;top:98px;width:66px;height:19px;background:#f0f0f0;border:1px solid #d9d9d9;border-bottom:none;"></div>
<div class="a" style="left:539px;top:96px;width:66px;height:23px;background:#fff;border:1px solid #d9d9d9;border-bottom:none;"></div>
<div class="t" style="top:101.27px;font-size:11.5px;color:#000;left:546.70px;transform:scaleX(0.9289);transform-origin:0 0;">Alphabetic</div>
<div class="t" style="top:103.27px;font-size:11.5px;color:#000;left:609.00px;transform:scaleX(0.9191);transform-origin:0 0;">Categorized</div>
<div class="a" style="left:542px;top:117px;width:308px;height:555px;background:#fff;border:1px solid #e0e0e0;"></div>
<div class="a" style="left:543px;top:118px;width:307px;height:553px;background:#fff;border:1px solid #80838c;"></div>
<div class="a" style="left:545px;top:120px;width:303px;height:549px;background:#fff;border-left:1px solid #696969;border-top:1px solid #696969;border-right:1px solid #d0d0d0;border-bottom:1px solid #d0d0d0;"></div>
<div class="a" style="left:546px;top:136px;width:301px;height:1px;background:#d4d4d4;"></div>
<div class="t" style="top:123.69px;font-size:11px;color:#000;left:546.00px;transform:scaleX(0.9408);transform-origin:0 0;">(Name)</div>
<div class="t" style="top:123.69px;font-size:11px;color:#6d6d6d;left:701.40px;">Лист1</div>
<div class="a" style="left:546px;top:152px;width:301px;height:1px;background:#d4d4d4;"></div>
<div class="t" style="top:139.69px;font-size:11px;color:#000;left:546.00px;transform:scaleX(0.9323);transform-origin:0 0;">DisplayPageBreaks</div>
<div class="t" style="top:139.69px;font-size:11px;color:#6d6d6d;left:701.40px;transform:scaleX(0.9180);transform-origin:0 0;">False</div>
<div class="a" style="left:546px;top:168px;width:301px;height:1px;background:#d4d4d4;"></div>
<div class="t" style="top:155.69px;font-size:11px;color:#000;left:546.00px;transform:scaleX(0.9802);transform-origin:0 0;">DisplayRightToLeft</div>
<div class="t" style="top:155.69px;font-size:11px;color:#6d6d6d;left:701.40px;transform:scaleX(0.9180);transform-origin:0 0;">False</div>
<div class="a" style="left:546px;top:184px;width:301px;height:1px;background:#d4d4d4;"></div>
<div class="t" style="top:171.69px;font-size:11px;color:#000;left:546.00px;transform:scaleX(0.9566);transform-origin:0 0;">EnableAutoFilter</div>
<div class="t" style="top:171.69px;font-size:11px;color:#6d6d6d;left:701.40px;transform:scaleX(0.9180);transform-origin:0 0;">False</div>
<div class="a" style="left:546px;top:200px;width:301px;height:1px;background:#d4d4d4;"></div>
<div class="t" style="top:187.69px;font-size:11px;color:#000;left:546.00px;transform:scaleX(0.9439);transform-origin:0 0;">EnableCalculation</div>
<div class="t" style="top:187.69px;font-size:11px;color:#6d6d6d;left:701.40px;transform:scaleX(0.9722);transform-origin:0 0;">True</div>
<div class="a" style="left:546px;top:216px;width:301px;height:1px;background:#d4d4d4;"></div>
<div class="t" style="top:203.69px;font-size:11px;color:#000;left:546.00px;transform:scaleX(0.9321);transform-origin:0 0;clip-path:inset(0 calc(100% - 152.3px / 0.932) 0 0);">EnableFormatConditionsCalculation</div>
<div class="t" style="top:203.69px;font-size:11px;color:#6d6d6d;left:701.40px;transform:scaleX(0.9722);transform-origin:0 0;">True</div>
<div class="a" style="left:546px;top:232px;width:301px;height:1px;background:#d4d4d4;"></div>
<div class="t" style="top:219.69px;font-size:11px;color:#000;left:546.00px;transform:scaleX(0.9437);transform-origin:0 0;">EnableOutlining</div>
<div class="t" style="top:219.69px;font-size:11px;color:#6d6d6d;left:701.40px;transform:scaleX(0.9180);transform-origin:0 0;">False</div>
<div class="a" style="left:546px;top:248px;width:301px;height:1px;background:#d4d4d4;"></div>
<div class="t" style="top:235.69px;font-size:11px;color:#000;left:546.00px;transform:scaleX(0.9539);transform-origin:0 0;">EnablePivotTable</div>
<div class="t" style="top:235.69px;font-size:11px;color:#6d6d6d;left:701.40px;transform:scaleX(0.9180);transform-origin:0 0;">False</div>
<div class="a" style="left:546px;top:264px;width:301px;height:1px;background:#d4d4d4;"></div>
<div class="t" style="top:251.69px;font-size:11px;color:#000;left:546.00px;transform:scaleX(0.9344);transform-origin:0 0;">EnableSelection</div>
<div class="t" style="top:251.69px;font-size:11px;color:#6d6d6d;left:701.40px;transform:scaleX(0.9753);transform-origin:0 0;">0 - xlNoRestrictions</div>
<div class="a" style="left:546px;top:265px;width:153px;height:15px;background:#0078d7;"></div>
<div class="a" style="left:546px;top:280px;width:301px;height:1px;background:#d4d4d4;"></div>
<div class="t" style="top:267.69px;font-size:11px;color:#fff;left:546.00px;transform:scaleX(0.8997);transform-origin:0 0;">Name</div>
<div class="t" style="top:267.69px;font-size:11px;color:#6d6d6d;left:701.40px;">Лист1</div>
<div class="a" style="left:546px;top:296px;width:301px;height:1px;background:#d4d4d4;"></div>
<div class="t" style="top:283.69px;font-size:11px;color:#000;left:546.00px;transform:scaleX(0.9320);transform-origin:0 0;">ScrollArea</div>
<div class="a" style="left:546px;top:312px;width:301px;height:1px;background:#d4d4d4;"></div>
<div class="t" style="top:299.69px;font-size:11px;color:#000;left:546.00px;transform:scaleX(0.9799);transform-origin:0 0;">StandardWidth</div>
<div class="t" style="top:299.69px;font-size:11px;color:#6d6d6d;left:701.40px;transform:scaleX(1.0270);transform-origin:0 0;">8,43</div>
<div class="a" style="left:546px;top:328px;width:301px;height:1px;background:#d4d4d4;"></div>
<div class="t" style="top:315.69px;font-size:11px;color:#000;left:546.00px;transform:scaleX(0.8784);transform-origin:0 0;">Visible</div>
<div class="t" style="top:315.69px;font-size:11px;color:#6d6d6d;left:701.40px;transform:scaleX(0.9610);transform-origin:0 0;">-1 - xlSheetVisible</div>
<div class="a" style="left:699px;top:121px;width:1px;height:208px;background:#d4d4d4;"></div>
<div class="a" style="left:0px;top:0px;width:1px;height:717px;background:#217346;"></div>
<div class="a" style="left:873px;top:0px;width:1px;height:717px;background:#217346;"></div>
<div class="a" style="left:0px;top:716px;width:874px;height:1px;background:#217346;"></div>
</body></html>
